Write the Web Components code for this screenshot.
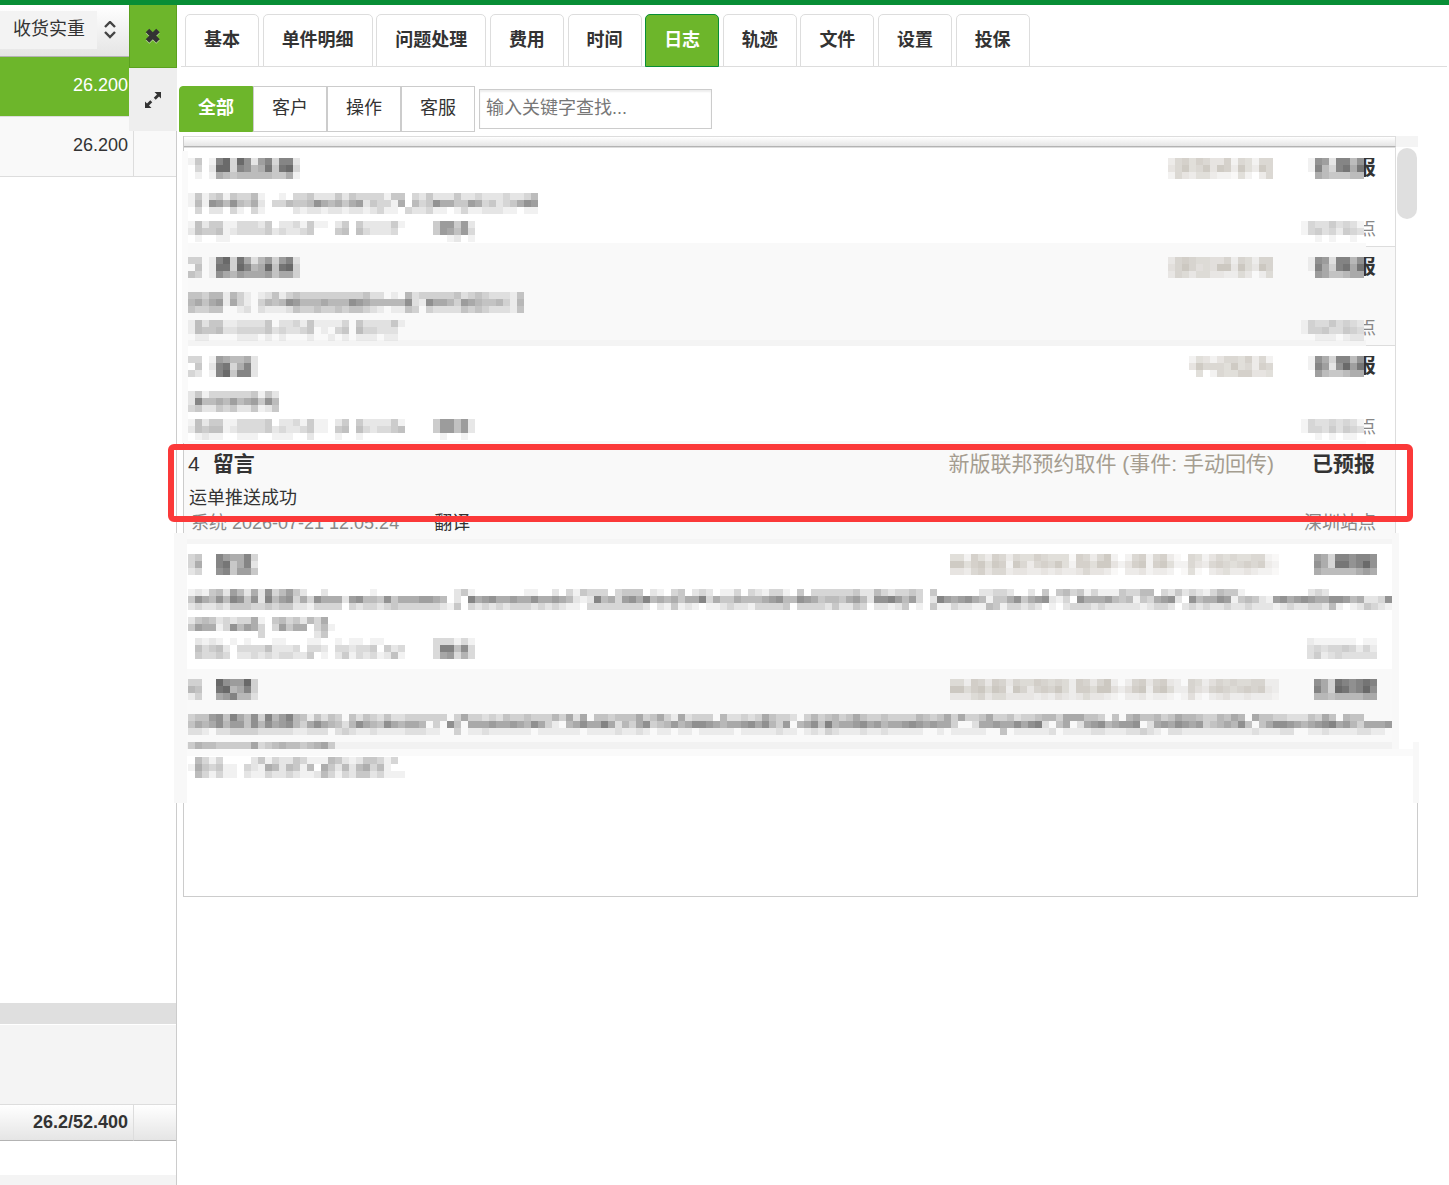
<!DOCTYPE html>
<html lang="zh-CN">
<head>
<meta charset="utf-8">
<title>日志</title>
<style>
  :root {
    --green: #6db62b;
    --green-dark: #088e36;
    --ink: #333;
    --line: #ccc;
    --line-soft: #ddd;
    --stripe: #f9f9f9;
    --bevel: linear-gradient(#fff, #e5e5e5);
  }
  body {
    margin: 0;
    background: #fff;
    color: var(--ink);
    font: 18px/26px "Liberation Sans", "Noto Sans CJK SC", sans-serif;
  }
</style>
</head>
<body>
<app-shell>
  <weight-sidebar slot="side"></weight-sidebar>
  <tab-bar>
    <tab-item>基本</tab-item>
    <tab-item>单件明细</tab-item>
    <tab-item>问题处理</tab-item>
    <tab-item>费用</tab-item>
    <tab-item>时间</tab-item>
    <tab-item active>日志</tab-item>
    <tab-item>轨迹</tab-item>
    <tab-item>文件</tab-item>
    <tab-item>设置</tab-item>
    <tab-item>投保</tab-item>
  </tab-bar>
  <log-filter></log-filter>
  <log-panel>
    <masked-entry cut>
      <pixel-mosaic slot="title" rows="14019b3b82793992 0302bb39856a4ab3 0101654555554461"></pixel-mosaic>
      <pixel-mosaic slot="tag" rows="367576447265266 468568487385386 264355322152036"></pixel-mosaic>
      <pixel-mosaic slot="status" rows="18729958 19539a6a 06544455"></pixel-mosaic>
      <span slot="status-end">报</span>
      <pixel-mosaic slot="body" rows="14134143351001033422242433331440324222422322232235 15187585462033544586564672433160534866447634234687 03022031031000021221221221231103223110131122211011 0"></pixel-mosaic>
      <pixel-mosaic slot="meta" rows="15244113332402231411024042222410000488482 25445123333423223400045053222300000487583 01001100000000000000000000000000000001201"></pixel-mosaic>
      <pixel-mosaic slot="site" rows="143353431 145342543 001010010"></pixel-mosaic>
      <span slot="site-end">点</span>
    </masked-entry>
    <masked-entry cut striped>
      <pixel-mosaic slot="title" rows="33019b3a62573792 0401aa3b956b4ab3 4301865766674663"></pixel-mosaic>
      <pixel-mosaic slot="tag" rows="367655446265266 468645488385386 365355332253025"></pixel-mosaic>
      <pixel-mosaic slot="status" rows="18729958 19639a6a 07644566"></pixel-mosaic>
      <span slot="status-end">报</span>
      <pixel-mosaic slot="body" rows="443551531012413433333333342201052333334234322214 564671631035458755565558765555582186653765445315 433440012021112433433434432101143032222434322214 0"></pixel-mosaic>
      <pixel-mosaic slot="meta" rows="1524411222240223141111304222241 1544522333342322340103405332220 0110000111010100010010101110110"></pixel-mosaic>
      <pixel-mosaic slot="site" rows="143353432 144533543 001110122"></pixel-mosaic>
      <span slot="site-end">点</span>
    </masked-entry>
    <masked-entry cut>
      <pixel-mosaic slot="title" rows="3301765562 04029a3692 32019b4992"></pixel-mosaic>
      <pixel-mosaic slot="tag" rows="254246657362 486665856376 050265577445"></pixel-mosaic>
      <pixel-mosaic slot="status" rows="18639958 19728b7a 07544566"></pixel-mosaic>
      <span slot="status-end">报</span>
      <pixel-mosaic slot="body" rows="2413333334142 2955657567485 3422434224124 0"></pixel-mosaic>
      <pixel-mosaic slot="meta" rows="15244113333402231411024042222410000488582 25455123333423223411045053233450000488582 01211001110011100200010010000000000010010"></pixel-mosaic>
      <pixel-mosaic slot="site" rows="143343431 144353543 001010110"></pixel-mosaic>
      <span slot="site-end">点</span>
    </masked-entry>
    <log-entry>
      <span slot="number">4</span>
      <span slot="title">留言</span>
      <span slot="tag">新版联邦预约取件 (事件: 手动回传)</span>
      <span slot="status">已预报</span>
      <span slot="body">运单推送成功</span>
      <span slot="meta">系统 2026-07-21 12:05:24</span>
      <span slot="site">深圳站点</span>
    </log-entry>
    <masked-entry>
      <pixel-mosaic slot="title" rows="3400976693 36009a4692 2300894774"></pixel-mosaic>
      <pixel-mosaic slot="tag" rows="55275376365576555176368202672673106524656556621 88578587286367685277588424782785226436765676732 44367466344334343346443103342332015103453343221"></pixel-mosaic>
      <pixel-mosaic slot="status" rows="763998998 863aa89b8 655555676"></pixel-mosaic>
      <pixel-mosaic slot="body" rows="1214527526283574200200000010000000000024100000001100203143330344402103402320113032133104033333342253233430400000022332002040453413111433550324232135441000000000232000000 4865859848295783638666278554846667765020967866766866765212956378695656466936446555678558764554675288975730297678651446846782130866675451436782085668714542178678766887562238640 2322324443343442213333032332343333332140323232333232321103333333320214121011232213333403333242243022124010411322115413323201023332322222123320232322322322212322332510124321 0 245423233610453425360 476613857630374660351 0000000000300000002400"></pixel-mosaic>
      <pixel-mosaic slot="meta" rows="02121010100011000110010110110000000333131 053452033335222303320332334042300003aa593 043343022323233224010241323125100003783630"></pixel-mosaic>
      <pixel-mosaic slot="site" rows="2111111011 3434454242 3523433333"></pixel-mosaic>
    </masked-entry>
    <masked-entry striped last>
      <pixel-mosaic slot="title" rows="3300b877b3 5400ab5693 1300679552"></pixel-mosaic>
      <pixel-mosaic slot="tag" rows="55276376365576565276368202673673206524656556622 88578587286367685277588424782785226436765676732 33356355333323243235332102231221014102342232221"></pixel-mosaic>
      <pixel-mosaic slot="status" rows="863a989a9 963ba89b8 554555566"></pixel-mosaic>
      <pixel-mosaic slot="body" rows="3447849648395795414243042432422333333036332324334333536260443444634631623330522323643320353453464334333354346363346334233455366644304056445346554335465064433222436405440 46568577485867853686542586548656650308406667667658631056866962536834575688765667868537056849566786756678767663002667668689204602678567780267687673456584046887656789675366678 221022333322222112220232112111122211003011211111101111110111121121011011011111011111211012132111211211111001011111004011111201111221112232102211111111112111220011211112211 0 3544333336234544345630"></pixel-mosaic>
    </masked-entry>
    <pixel-mosaic slot="footer" rows="05313000024132243111542124431300 16434110321652541506425256351000 053131102113223211253132442311100"></pixel-mosaic>
  </log-panel>
</app-shell>

<script>
const define = (name, html, setup) => {
  const template = document.createElement('template');
  template.innerHTML = html;
  customElements.define(name, class extends HTMLElement {
    constructor() {
      super();
      this.attachShadow({ mode: 'open' }).append(template.content.cloneNode(true));
    }

    connectedCallback() {
      if (setup) setup(this, this.shadowRoot);
    }
  });
};

define('app-shell', /* html */`
  <style>
    :host {
      display: flex;
      min-height: 100vh;
      box-sizing: border-box;
      border-top: 5px solid var(--green-dark);
    }
    main { flex: 1; min-width: 0; }
  </style>
  <slot name="side"></slot>
  <main><slot></slot></main>
`);

define('weight-sidebar', /* html */`
  <style>
    :host {
      position: relative;
      display: flex;
      flex-direction: column;
      width: 176px;
      border-right: 1px solid var(--line);
    }
    table { width: 100%; table-layout: fixed; border-collapse: separate; border-spacing: 0; }
    col:first-child { width: 134px; }
    th, td { padding: 0; box-sizing: border-box; }
    thead th { height: 52px; background: var(--bevel); border-bottom: 1px solid #b3b3b3; font-weight: normal; }
    .sort {
      display: flex;
      align-items: center;
      gap: 7px;
      padding: 0 0 2px;
      border: 0;
      background: none;
      color: inherit;
      font: inherit;
    }
    .sort span { width: 97px; box-sizing: border-box; padding: 5px 12px 7px 13px; background: #f3f3f3; white-space: nowrap; }
    tbody td { height: 60px; padding: 0 5px 4px 0; text-align: right; border-bottom: 1px solid var(--line-soft); background: var(--stripe); }
    td:first-child { border-right: 1px solid var(--line-soft); }
    .selected td { color: #fff; background: var(--green); border-right-color: var(--green); }
    .space { flex: 1; }
    .track { height: 21px; background: #dfdfdf; }
    .gap { height: 79px; margin-top: 1px; background: #f4f4f4; }
    .total td {
      height: 37px;
      padding: 0 5px 2px 0;
      text-align: right;
      font-weight: bold;
      background: var(--bevel);
      border-top: 1px solid var(--line-soft);
      border-bottom: 1px solid #b3b3b3;
    }
    .end { height: 10px; margin-top: 34px; background: #f4f4f4; }
    .tools { position: absolute; top: 0; right: -1px; width: 48px; }
    .tools button {
      display: flex;
      align-items: center;
      justify-content: center;
      width: 100%;
      height: 63px;
      padding: 0;
      border: 0;
      background: #eee;
      color: var(--ink);
    }
    .tools .close { background: var(--green); border: 1px solid #5ba11f; border-top: 0; }
  </style>
  <table>
    <colgroup><col><col></colgroup>
    <thead>
      <tr>
        <th><button class="sort"><span>收货实重</span>
          <svg width="12" height="18" viewBox="0 0 12 18" fill="none" stroke="#444" stroke-width="2.4"><path d="M1 6l5-5 5 5M1 11l5 5 5-5"/></svg>
        </button></th>
        <th></th>
      </tr>
    </thead>
    <tbody>
      <tr class="selected"><td>26.200</td><td></td></tr>
      <tr><td>26.200</td><td></td></tr>
    </tbody>
  </table>
  <div class="space"></div>
  <div class="track"></div>
  <div class="gap"></div>
  <table class="total">
    <colgroup><col><col></colgroup>
    <tr><td>26.2/52.400</td><td></td></tr>
  </table>
  <div class="end"></div>
  <div class="tools">
    <button class="close" aria-label="关闭">
      <svg width="16" height="16" viewBox="0 0 16 16"><path fill="none" stroke="#fff" stroke-opacity=".5" stroke-width="5" d="M2.500 3.500l10.500 10.500M13 3.500L2.500 14"/><path fill="none" stroke="#333" stroke-width="5" d="M2.500 2.500l10.500 10.500M13 2.500L2.500 13"/></svg>
    </button>
    <button aria-label="展开">
      <svg width="18" height="18" viewBox="0 0 18 18" fill="currentColor"><path d="M10.500 1H17v6.500l-2-2-4 4L9 7.500l4-4zM1 17v-6.500l2 2 4-4L9 10.500l-4 4L7.500 17z"/><path d="M8 6l4 4M6 8l4 4" stroke="#eee" stroke-width="1.400"/></svg>
    </button>
  </div>
`);

define('tab-bar', /* html */`
  <style>
    /* the word spaces between the tabs make up the gaps */
    :host {
      display: block;
      margin: 0 2px 0 4px;
      padding: 9px 0 0 4px;
      font-size: 13px;
      line-height: 0;
      white-space: nowrap;
      height: 52px;
      border-bottom: 1px solid var(--line-soft);
    }
  </style>
  <slot></slot>
`);

define('tab-item', /* html */`
  <style>
    :host { display: inline-block; vertical-align: top; }
    button {
      height: 53px;
      padding: 0 18px 1px;
      border: 1px solid var(--line-soft);
      border-radius: 5px 5px 0 0;
      background: #fff;
      color: var(--ink);
      font-family: inherit;
      font-size: 18px;
      font-weight: bold;
      line-height: 26px;
    }
    :host([active]) button { background: var(--green); border-color: var(--green-dark); color: #fff; }
  </style>
  <button><slot></slot></button>
`);

define('log-filter', /* html */`
  <style>
    :host { display: flex; align-items: center; margin: 19px 0 0 2px; height: 46px; }
    button {
      width: 74px;
      height: 46px;
      padding: 0 0 2px;
      border: 1px solid var(--line);
      background: #fff;
      color: var(--ink);
      font: inherit;
    }
    button.on { background: var(--green); border-color: var(--green); color: #fff; font-weight: bold; border-radius: 4px 0 0 0; }
    input {
      width: 233px;
      height: 40px;
      box-sizing: border-box;
      margin-left: 4px;
      padding: 0 6px 2px;
      border: 1px solid var(--line);
      box-shadow: inset 0 2px 2px #eee;
      color: var(--ink);
      font: inherit;
    }
    input::placeholder { color: #777; }
  </style>
  <button class="on">全部</button><button>客户</button><button>操作</button><button>客服</button>
  <input type="search" aria-label="输入关键字查找" placeholder="输入关键字查找...">
`);

define('pixel-mosaic', /* html */`
  <style>
    :host { display: block; }
    svg { display: block; }
  </style>
  <svg aria-hidden="true" shape-rendering="crispEdges" fill="currentColor"></svg>
`, (host, root) => {
  // one hex digit per cell, 0 is clear and f is solid
  const cell = 7;
  const rows = host.getAttribute('rows').split(' ').map(row => row.slice(0, 172));
  const svg = root.querySelector('svg');
  svg.setAttribute('width', Math.max(...rows.map(row => row.length)) * cell);
  svg.setAttribute('height', rows.length * cell);
  svg.innerHTML = rows.map((row, y) => [...row].map((digit, x) => {
    const level = parseInt(digit, 16);
    return level ? `<rect x="${x * cell}" y="${y * cell}" width="${cell}" height="${cell}" opacity="${(level / 15).toFixed(2)}"/>` : '';
  }).join('')).join('');
});

define('masked-entry', /* html */`
  <style>
    :host { display: block; position: relative; padding: 10px 0 10px 4px; background: #fff; }
    :host([cut]) { padding-bottom: 5px; }
    :host([striped]) { background: var(--stripe); }
    :host([last]) { padding-bottom: 0; background: linear-gradient(#f2f2f2, #f2f2f2) bottom / 100% 7px no-repeat var(--stripe); }
    :host([last]) .meta { display: none; }
    .line { display: flex; padding-right: 18px; height: 21px; }
    :host([cut]) .line { padding-right: 19px; }
    .head { margin-bottom: 14px; }
    .tag { margin-left: auto; margin-right: 35px; color: #a59d90; }
    .site { display: flex; margin-left: auto; color: #666; }
    .meta { color: #444; }
    .status { display: flex; }
    .end { display: none; justify-content: flex-end; width: 12px; overflow: hidden; }
    :host([cut]) .end { display: flex; }
    .status .end { font-size: 21px; line-height: 18px; font-weight: bold; }
    .site .end { line-height: 16px; color: #888; }
    /* the divider shows only right of the mask, the next row's colour runs up under it */
    :host([cut])::after {
      content: "";
      position: absolute;
      right: 0;
      bottom: 0;
      width: 29px;
      border-bottom: 1px solid var(--line-soft);
    }
    :host([cut][striped]) { background: linear-gradient(90deg, #f4f4f4 calc(100% - 29px), var(--stripe) 0) bottom / 100% 6px no-repeat var(--stripe); }
    :host([cut]:not([striped])) { background: linear-gradient(90deg, var(--stripe) calc(100% - 29px), #fff 0) bottom / 100% 4px no-repeat #fff; }
  </style>
  <div class="line head">
    <slot name="title"></slot>
    <div class="tag"><slot name="tag"></slot></div>
    <div class="status"><slot name="status"></slot><div class="end"><slot name="status-end"></slot></div></div>
  </div>
  <slot name="body"></slot>
  <div class="line meta">
    <slot name="meta"></slot>
    <div class="site"><slot name="site"></slot><div class="end"><slot name="site-end"></slot></div></div>
  </div>
`);

define('log-entry', /* html */`
  <style>
    :host { display: block; position: relative; height: 99px; background: var(--stripe); }
    .line { display: flex; padding: 1px 19px 0 5px; line-height: 26px; }
    .head { height: 39px; padding: 0 20px 0 4px; font-size: 21px; line-height: 37px; }
    .title { margin-left: 13px; font-weight: bold; }
    .tag { margin-left: auto; margin-right: 38px; color: #a59d90; }
    .status { font-weight: bold; }
    .meta { color: #888; padding-top: 0; padding-left: 7px; line-height: 24px; }
    button { margin: 0 0 0 35px; padding: 0; border: 0; background: none; color: var(--ink); font: inherit; line-height: 24px; }
    .site { margin-left: auto; }
    .mask { position: absolute; inset: auto -3px 0 0; height: 11px; background: linear-gradient(var(--stripe) 6px, #f5f5f5 0); }
    .frame {
      position: absolute;
      z-index: 2;
      inset: -1px -18px auto -16px;
      height: 66px;
      border: 6px solid #fb3939;
      border-radius: 6px;
    }
  </style>
  <div class="line head">
    <slot name="number"></slot>
    <div class="title"><slot name="title"></slot></div>
    <div class="tag"><slot name="tag"></slot></div>
    <div class="status"><slot name="status"></slot></div>
  </div>
  <div class="line"><slot name="body"></slot></div>
  <div class="line meta">
    <slot name="meta"></slot>
    <button>翻译</button>
    <div class="site"><slot name="site"></slot></div>
  </div>
  <div class="mask"></div>
  <div class="frame"></div>
`);

define('log-panel', /* html */`
  <style>
    :host {
      display: block;
      position: relative;
      margin: 4px 31px 0 6px;
      border: 1px solid var(--line);
      border-width: 0 0 1px 1px;
    }
    .top { display: flex; align-items: flex-start; height: 12px; }
    .strip { flex: 1; height: 11px; box-sizing: border-box; background: var(--bevel); border: 1px solid var(--line-soft); border-left: 0; border-bottom: 1px solid #b3b3b3; box-shadow: 0 1px #ddd; }
    .corner { width: 22px; height: 11px; background: #f4f4f4; }
    .scroll { display: flex; }
    .rows { flex: 1; min-width: 0; border-right: 1px solid var(--line-soft); }
    .bar { width: 22px; }
    .thumb { width: 20px; height: 71px; margin-left: 1px; border-radius: 10px; background: #dfdfdf; }
    .foot { box-sizing: border-box; height: 147px; padding: 1px 0 0 4px; border-top: 7px solid #fafafa; border-right: 1px solid var(--line); }
    .veil { position: absolute; background: #f8f8f8; }
    .upper { left: -2px; top: 15px; width: 6px; height: 292px; background: #fafafa; }
    .left { left: -10px; top: 397px; width: 13px; height: 270px; }
    .right { right: 19px; top: 397px; width: 7px; height: 216px; }
    .corner-veil { right: -1px; top: 606px; width: 6px; height: 61px; }
  </style>
  <div class="top"><div class="strip"></div><div class="corner"></div></div>
  <div class="scroll">
    <div class="rows"><slot></slot></div>
    <div class="bar"><div class="thumb"></div></div>
  </div>
  <div class="foot"><slot name="footer"></slot></div>
  <div class="veil upper"></div>
  <div class="veil left"></div>
  <div class="veil right"></div>
  <div class="veil corner-veil"></div>
`);
</script>
</body>
</html>
